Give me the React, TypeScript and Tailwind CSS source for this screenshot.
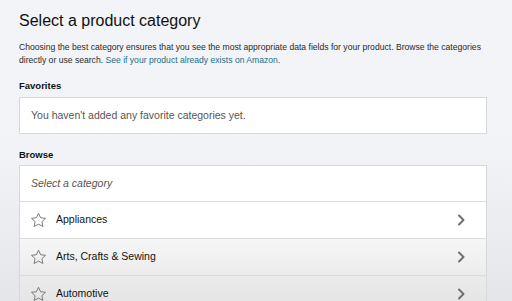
import React from "react";

function Star() {
  return (
    <svg width="17" height="17" viewBox="0 0 24 24" fill="none" stroke="#707070" strokeWidth="1.3" strokeLinejoin="round">
      <path d="M12 1.8l3 6.3 6.9.8-5.1 4.75 1.4 6.85L12 17.1l-6.2 3.4 1.4-6.85L2.1 8.9l6.9-.8z" />
    </svg>
  );
}

function Chevron() {
  return (
    <svg width="10" height="12" viewBox="0 0 10 12" fill="none" stroke="#6f6f6f" strokeWidth="2" strokeLinecap="round" strokeLinejoin="round">
      <path d="M3 1.5l4.5 4.5L3 10.5" />
    </svg>
  );
}

const rows = [
  { name: "Appliances", bg: "bg-white" },
  { name: "Arts, Crafts & Sewing", bg: "bg-gradient-to-b from-[#f6f6f6] to-[#ececec]" },
  { name: "Automotive", bg: "bg-gradient-to-b from-[#ebebeb] to-[#e3e3e3]" },
];

export default function App() {
  return (
    <div
      className="w-[512px] h-[301px] overflow-hidden bg-gradient-to-b from-[#f2f4f7] via-[#f1f3f6] to-[#e4e6e9] text-[#111]"
      style={{ fontFamily: '"Liberation Sans", Arial, sans-serif' }}
    >
      <div className="pl-[19px] pr-[25px] pt-[9px]">
        <h1 className="text-[16px] leading-[24px] text-[#111] font-normal">Select a product category</h1>
        <p className="mt-[8px] text-[8.6px] leading-[13px] text-[#2a2a2a] whitespace-nowrap">
          Choosing the best category ensures that you see the most appropriate data fields for your product. Browse the categories
          <br />
          directly or use search. <span className="text-[#1a6f8a]">See if your product already exists on Amazon.</span>
        </p>
        <div className="mt-[13px] text-[9.5px] font-bold leading-[12px]">Favorites</div>
        <div className="mt-[5px] h-[37px] bg-white border border-[#d5d9d9] flex items-center pl-[11px]">
          <span className="text-[10.5px] text-[#555]">You haven't added any favorite categories yet.</span>
        </div>
        <div className="mt-[15px] text-[9.5px] font-bold leading-[12px]">Browse</div>
        <div className="mt-[4px] border border-[#d5d9d9] bg-white">
          <div className="h-[36px] flex items-center pl-[11px] border-b border-[#dcdcdc]">
            <span className="text-[10.5px] italic text-[#555]">Select a category</span>
          </div>
          {rows.map((r) => (
            <div key={r.name} className={`h-[37px] flex items-center pl-[10px] pr-[20px] border-b border-[#dcdcdc] ${r.bg}`}>
              <Star />
              <span className="ml-[9px] text-[10.5px] text-[#111] flex-1">{r.name}</span>
              <Chevron />
            </div>
          ))}
        </div>
      </div>
    </div>
  );
}
